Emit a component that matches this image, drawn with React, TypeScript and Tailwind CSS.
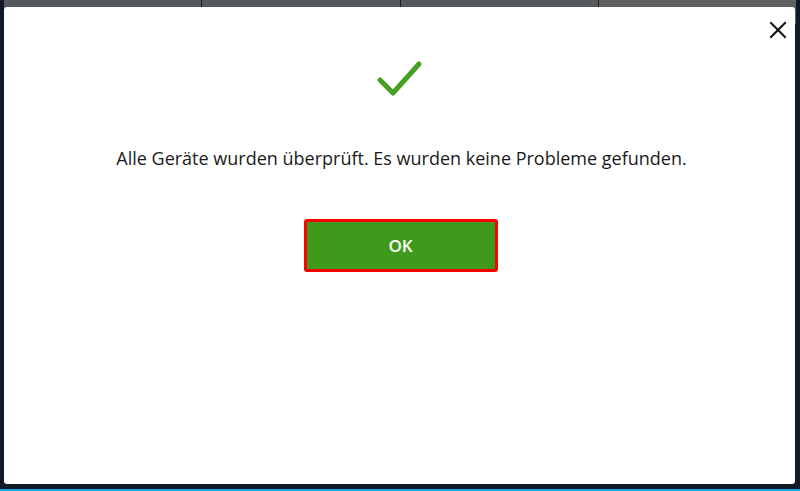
import React from 'react';

const tabs = ['', '', '', ''];

function CheckIcon() {
  return (
    <svg width="48" height="38" viewBox="0 0 48 38" fill="none">
      <path
        d="M4 21 L17 34 L43 5"
        stroke="#46a021"
        strokeWidth="5"
        strokeLinecap="round"
        strokeLinejoin="round"
      />
    </svg>
  );
}

function CloseIcon() {
  return (
    <svg width="18" height="18" viewBox="0 0 18 18" fill="none">
      <path d="M2 2 L16 16 M16 2 L2 16" stroke="#111" strokeWidth="2" strokeLinecap="square" />
    </svg>
  );
}

export default function App() {
  return (
    <div
      className="relative w-[800px] h-[491px] bg-[#121926] flex flex-col overflow-hidden"
      style={{ fontFamily: '"Open Sans", "Noto Sans", sans-serif' }}
    >
      {/* Window behind the dialog */}
      <div className="flex-1 px-[4px] pb-[7px]">
        <div className="flex h-[24px] bg-[#55595e]">
          {tabs.map((_, i) => (
            <div
              key={i}
              className={`flex-1 ${i < tabs.length - 1 ? 'border-r border-[#1b1e23]' : 'bg-[#616161]'}`}
            />
          ))}
        </div>
      </div>
      <div className="h-[2px] bg-[#1ba1e2]" />

      {/* Result dialog */}
      <div className="absolute left-[4px] top-[7px] w-[791px] h-[477px] bg-white rounded-[3px] flex flex-col items-center">
        <button className="absolute right-[8px] top-[14px] p-0">
          <CloseIcon />
        </button>
        <div className="mt-[52px]">
          <CheckIcon />
        </div>
        <p className="mt-[48px] ml-[4px] text-[18px] leading-[26px] text-[#1a1a1a]">
          Alle Geräte wurden überprüft. Es wurden keine Probleme gefunden.
        </p>
        <button className="mt-[48px] ml-[2px] w-[194px] h-[53px] border-[3px] border-[#ff0000] rounded-[3px] bg-[#3f9a1b] text-white text-[17px] font-semibold">
          OK
        </button>
      </div>
    </div>
  );
}
